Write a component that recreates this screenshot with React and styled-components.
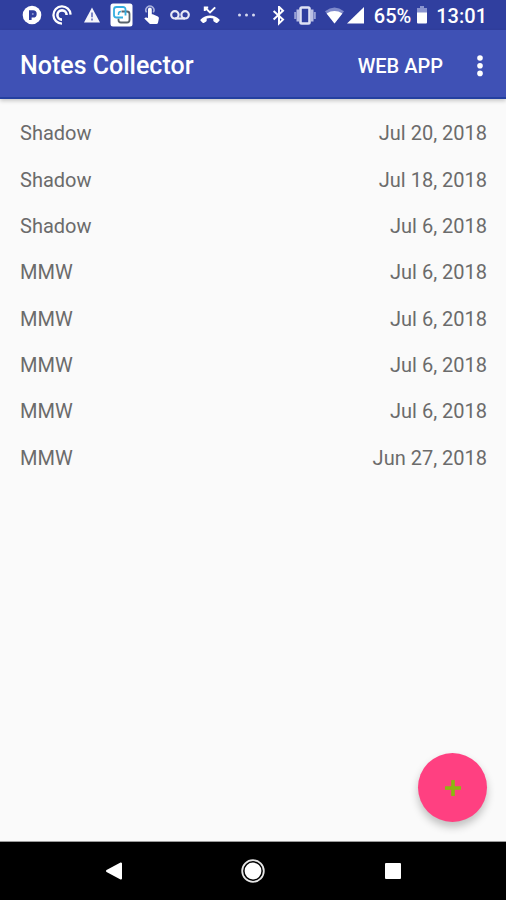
import React from "react";
import styled, { createGlobalStyle } from "styled-components";

const notes = [
  { id: 1, title: "Shadow", date: "Jul 20, 2018" },
  { id: 2, title: "Shadow", date: "Jul 18, 2018" },
  { id: 3, title: "Shadow", date: "Jul 6, 2018" },
  { id: 4, title: "MMW", date: "Jul 6, 2018" },
  { id: 5, title: "MMW", date: "Jul 6, 2018" },
  { id: 6, title: "MMW", date: "Jul 6, 2018" },
  { id: 7, title: "MMW", date: "Jul 6, 2018" },
  { id: 8, title: "MMW", date: "Jun 27, 2018" },
];

const StatusIcons = () => (
  <IconGroup>
    <svg width="20" height="20" viewBox="0 0 20 20">
      <circle cx="10" cy="10" r="9.3" fill="#fff" />
      <path
        d="M7 5.200h4a3.700 3.700 0 0 1 0 7.400H9.600V15H7z"
        fill="#303f9f"
      />
      <circle cx="10.800" cy="8.900" r="1" fill="#8d97d0" />
    </svg>
    <svg width="20" height="20" viewBox="0 0 20 20" fill="none" stroke="#fff">
      <path d="M18.6 9.600A8.600 8.600 0 1 0 10 18.600" strokeWidth="2.3" />
      <path d="M14.6 10A4.600 4.600 0 1 0 10 14.600" strokeWidth="2.6" />
    </svg>
    <svg width="18" height="20" viewBox="0 0 18 20">
      <path d="M10 2.4 18 17.4H2z" fill="#f4f5fb" />
      <path d="M10 7.6v4.6M10 13.6v2" stroke="#6a76bf" strokeWidth="1.7" />
    </svg>
    <svg width="24" height="24" viewBox="0 0 24 24" fill="none">
      <rect x="0.5" y="0.5" width="22" height="23" rx="2.5" fill="#fff" />
      <path
        d="M11.500 8.500H17a2.500 2.500 0 0 1 2.500 2.500v6a2.500 2.500 0 0 1-2.500 2.500h-6A2.500 2.500 0 0 1 8.500 17v-1.500"
        stroke="#59636b"
        strokeWidth="1.8"
      />
      <path
        d="M15.500 12.500V6.500a2.500 2.500 0 0 0-2.500-2.500H6.500A2.500 2.500 0 0 0 4 6.500V12a2.500 2.500 0 0 0 2.500 2.500H13"
        stroke="#35aee0"
        strokeWidth="1.8"
      />
      <path d="M8.500 12v-1A2.500 2.500 0 0 1 11 8.500" stroke="#35aee0" strokeWidth="1.5" />
    </svg>
    <svg width="16" height="20" viewBox="0 0 16 20">
      <path
        d="M2.600 7.400A4 4 0 1 1 9.200 7.400"
        fill="none"
        stroke="#aab2dc"
        strokeWidth="1.6"
      />
      <path
        d="M4 4.400a1.900 1.900 0 0 1 3.800 0v4.800h1l5.100 2.300q1.100.5 1 1.700l-.9 4.500q-.3 1.300-1.600 1.300H6.600q-.7 0-1.200-.5L.3 13.600l.8-.8q.5-.5 1.200-.3l1.700.5z"
        fill="#fff"
      />
    </svg>
    <svg
      width="20"
      height="20"
      viewBox="0 0 20 20"
      fill="none"
      stroke="#e8eaf6"
      strokeWidth="2.2"
    >
      <circle cx="4.900" cy="9.800" r="3.700" />
      <circle cx="15.100" cy="9.800" r="3.700" />
      <path d="M5 13.500h10" />
    </svg>
    <svg width="20" height="20" viewBox="0 0 20 20">
      <path
        d="M5.400 3 10 7.400 15.200 2.400M4.800 6V2.600h3.400"
        fill="none"
        stroke="#fff"
        strokeWidth="2"
      />
      <path
        d="M.6 14.600C5.800 9 14.200 9 19.400 14.600q.5.600 0 1.200l-2 2q-.6.500-1.200.1l-2.400-1.500q-.5-.3-.5-.9v-2.100q-3.300-1-6.600 0v2.100q0 .6-.5.900l-2.400 1.500q-.6.400-1.200-.1l-2-2q-.5-.6 0-1.200z"
        fill="#fff"
      />
    </svg>
    <svg width="34" height="20" viewBox="0 0 34 20" fill="#d5d9f0">
      <circle cx="9.500" cy="10" r="1.500" />
      <circle cx="16.500" cy="10" r="1.500" />
      <circle cx="23.500" cy="10" r="1.500" />
    </svg>
  </IconGroup>
);

const SystemIcons = () => (
  <SystemGroup>
    <svg width="14" height="20" viewBox="0 0 14 20">
      <path
        d="m2.600 5 9.400 8.600L8 17.400V.8l4 4L2.600 13.400"
        fill="none"
        stroke="#fff"
        strokeWidth="2"
      />
    </svg>
    <svg width="22" height="20" viewBox="0 0 22 20">
      <path d="M1.200 6v7M20.800 6v7" stroke="#98a1d5" strokeWidth="2" />
      <path d="M3.800 3.500v12M18.200 3.500v12" stroke="#b9bfe4" strokeWidth="2.600" />
      <rect
        x="6.500"
        y="1.500"
        width="9"
        height="16"
        rx="1.200"
        fill="none"
        stroke="#dfe2f4"
        strokeWidth="2.600"
      />
    </svg>
    <SignalPair>
      <svg width="20" height="20" viewBox="0 0 20 20">
        <path d="M0 5.200Q9.500-2 19 5.200L9.500 17.500z" fill="#7f8acb" />
        <path d="M1.600 7.400Q9.500 2.600 17.400 7.400L9.500 17.500z" fill="#fff" />
      </svg>
      <svg width="18" height="20" viewBox="0 0 18 20">
        <path d="M17 1V17.500H0z" fill="#fff" />
      </svg>
    </SignalPair>
    <Battery>
      65%
      <svg width="10" height="20" viewBox="0 0 10 20">
        <path d="M3 0h4v2h3v5H0V2h3z" fill="#8a94cf" />
        <path d="M0 6.500h10V16.500q0 1-1 1H1q-1 0-1-1z" fill="#fff" />
      </svg>
    </Battery>
    <time>13:01</time>
  </SystemGroup>
);

const App = () => {
  return (
    <Screen>
      <GlobalStyle />
      <StatusBar>
        <StatusIcons />
        <SystemIcons />
      </StatusBar>
      <Toolbar>
        <h1>Notes Collector</h1>
        <TextButton type="button">WEB APP</TextButton>
        <MenuButton type="button" aria-label="More options">
          <svg width="8" height="24" viewBox="0 0 8 24" fill="#fff">
            <circle cx="4" cy="4" r="2.8" />
            <circle cx="4" cy="11.7" r="2.8" />
            <circle cx="4" cy="19.4" r="2.8" />
          </svg>
        </MenuButton>
      </Toolbar>
      <Content>
        <NoteList>
          {notes.map((note) => (
            <NoteRow key={note.id}>
              <span>{note.title}</span>
              <time>{note.date}</time>
            </NoteRow>
          ))}
        </NoteList>
        <AddButton type="button" aria-label="Add note">
          <svg width="18" height="18" viewBox="0 0 18 18">
            <path d="M9 1v16M1 9h16" stroke="#8bb80f" strokeWidth="3.6" />
          </svg>
        </AddButton>
      </Content>
      <NavBar>
        <button type="button" aria-label="Back">
          <svg width="18" height="18" viewBox="0 0 18 18">
            <path
              d="M17 1.500v15L3 9z"
              fill="#fff"
              stroke="#fff"
              strokeWidth="2"
              strokeLinejoin="round"
            />
          </svg>
        </button>
        <button type="button" aria-label="Home">
          <svg width="24" height="24" viewBox="0 0 24 24">
            <circle cx="12" cy="12" r="8.4" fill="#fff" />
            <circle
              cx="12"
              cy="12"
              r="10.8"
              fill="none"
              stroke="#e6e6e6"
              strokeWidth="1.8"
            />
          </svg>
        </button>
        <button type="button" aria-label="Recent apps">
          <svg width="16" height="16" viewBox="0 0 16 16">
            <rect width="16" height="16" rx="1" fill="#fff" />
          </svg>
        </button>
      </NavBar>
    </Screen>
  );
};

const GlobalStyle = createGlobalStyle`
  * {
    box-sizing: border-box;
    margin: 0;
    padding: 0;
  }
  body {
    font-family: Roboto, "Liberation Sans", sans-serif;
    background: #fafafa;
  }
  button {
    border: none;
    background: none;
    color: inherit;
    font-family: inherit;
    cursor: pointer;
  }
  svg {
    display: block;
    flex-shrink: 0;
  }
`;

const Screen = styled.div`
  display: flex;
  flex-direction: column;
  min-height: 100vh;
`;

const StatusBar = styled.div`
  display: flex;
  justify-content: space-between;
  align-items: center;
  height: 30px;
  padding: 0 19px 0 22px;
  background: #303f9f;
  color: #fff;
`;

const IconGroup = styled.div`
  display: flex;
  align-items: center;
  gap: 10px;
`;

const SystemGroup = styled.div`
  display: flex;
  align-items: center;
  gap: 9px;
  padding-top: 2px;
  font-size: 20px;
  font-weight: 500;
  line-height: 28px;
`;

const SignalPair = styled.div`
  display: flex;
  gap: 2px;
`;

const Battery = styled.div`
  display: flex;
  align-items: center;
  gap: 6px;
`;

const Toolbar = styled.header`
  display: flex;
  align-items: center;
  height: 69px;
  padding: 4px 11px 0 20px;
  background: #3f51b5;
  border-bottom: 2px solid #2440a0;
  box-shadow: 0 2px 4px rgba(0, 0, 0, 0.2);
  color: #fff;
  z-index: 1;
  h1 {
    flex: 1;
    font-size: 25px;
    font-weight: 500;
  }
`;

const TextButton = styled.button`
  padding: 12px 16px;
  font-size: 20px;
  font-weight: 500;
`;

const MenuButton = styled.button`
  display: flex;
  justify-content: center;
  width: 30px;
  margin-left: 6px;
  padding: 8px 0;
`;

const Content = styled.main`
  position: relative;
  flex: 1;
  padding: 11px 0 90px;
  background: #fafafa;
  border-bottom: 1px solid #9b9b9b;
`;

const NoteList = styled.ul`
  display: grid;
  grid-auto-rows: 1fr;
  min-height: 371px;
  padding: 0 19px 0 20px;
  list-style: none;
`;

const NoteRow = styled.li`
  display: flex;
  justify-content: space-between;
  align-items: center;
  color: #6b6b6b;
  font-size: 20px;
`;

const AddButton = styled.button`
  position: absolute;
  right: 19px;
  bottom: 19px;
  display: flex;
  justify-content: center;
  align-items: center;
  width: 69px;
  height: 69px;
  border-radius: 50%;
  background: #ff4081;
  box-shadow: 0 5px 9px rgba(0, 0, 0, 0.24);
`;

const NavBar = styled.nav`
  display: grid;
  grid-template-columns: repeat(3, 1fr);
  height: 58px;
  padding: 0 43px;
  background: #000;
  button {
    display: flex;
    justify-content: center;
    align-items: center;
  }
`;

export default App;
